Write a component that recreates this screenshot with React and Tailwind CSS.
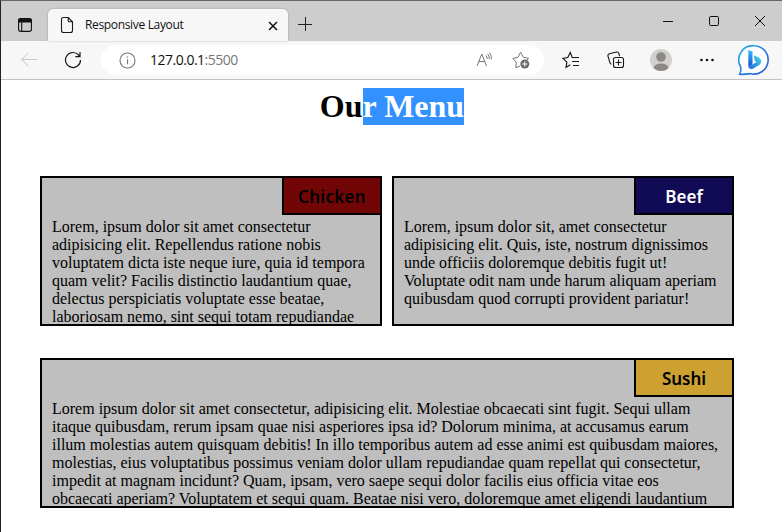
const svg = (x) => ({ fill: "none", stroke: x, className: "block shrink-0" });

function Tab() {
  return (
    <div className="mt-[8px] flex h-8 w-[240px] items-center rounded-t-[5px] bg-[#f7f7f7] shadow-[0_0_2px_rgba(0,0,0,0.3)]">
      <svg {...svg("#1a1a1a")} width="14" height="18" viewBox="0 0 14 18" className="ml-3 block shrink-0" strokeWidth="1.1">
        <path d="M3.2 1.5H8.2L12.5 5.8V14.5Q12.5 16.5 10.5 16.5H3.5Q1.5 16.5 1.5 14.5V3.2Q1.5 1.5 3.2 1.5ZM8.2 1.5V4.8Q8.2 5.8 9.2 5.8H12.5" />
      </svg>
      <span className="ml-[11px] w-[98px] whitespace-nowrap font-['Open_Sans',sans-serif] text-[12px] leading-4 tracking-[-0.34px] text-[#111]">Responsive Layout</span>
      <svg {...svg("#111")} width="10" height="10" viewBox="0 0 10 10" className="mt-px ml-[85px] block shrink-0" strokeWidth="1.5">
        <path d="M1 1L9 9M9 1L1 9" />
      </svg>
    </div>
  );
}

function TitleBar() {
  return (
    <div className="flex h-10 items-start bg-[#cdcdcd]">
      <div className="flex w-[47px] justify-start pt-[17px] pl-[17px]">
        <svg {...svg("#111")} width="14" height="14" viewBox="0 0 14 14" strokeWidth="1.1">
          <rect x=".6" y=".6" width="12.8" height="12.8" rx="2.2" />
          <path d="M1 1.2H13V4H1Z" fill="#111" />
          <path d="M3.7 4V13" />
        </svg>
      </div>
      <Tab />
      <svg {...svg("#222")} width="14" height="14" viewBox="0 0 14 14" className="mt-[16px] ml-[10px] block" strokeWidth="1">
        <path d="M0 7.5H14M7.5 0V14" />
      </svg>
      <div className="mt-[15px] mr-[17px] ml-auto flex gap-9">
        <svg {...svg("#111")} width="10" height="10" viewBox="0 0 10 10"><path d="M0 5.5H10" /></svg>
        <svg {...svg("#111")} width="10" height="10" viewBox="0 0 10 10"><rect x=".5" y=".5" width="9" height="9" rx="1.2" /></svg>
        <svg {...svg("#111")} width="10" height="10" viewBox="0 0 10 10"><path d="M0 0L10 10M10 0L0 10" /></svg>
      </div>
    </div>
  );
}

function BingLogo() {
  return (
    <svg width="32" height="34" viewBox="0 0 32 34" className="ml-[24px] block shrink-0">
      <defs>
        <linearGradient id="ring" x1="0" y1="0" x2="1" y2="1">
          <stop offset="0" stopColor="#26b4ef" />
          <stop offset=".55" stopColor="#2278dc" />
          <stop offset="1" stopColor="#3557db" />
        </linearGradient>
        <linearGradient id="stem" x1="0" y1="0" x2="0" y2="1">
          <stop offset="0" stopColor="#36bdf5" />
          <stop offset="1" stopColor="#1749d2" />
        </linearGradient>
        <linearGradient id="bowl" x1="0" y1="1" x2="1" y2="0">
          <stop offset="0" stopColor="#1b62e4" />
          <stop offset="1" stopColor="#42e0e6" />
        </linearGradient>
      </defs>
      <path d="M16 2.7A14.2 14.2 0 1 1 12.2 30.6Q7 31.5 1.7 31.3Q3.2 29 2.7 24A14.2 14.2 0 0 1 16 2.7Z" fill="#fff" stroke="url(#ring)" strokeWidth="1.6" />
      <path d="M10.3 7L14.5 8.5V21.5L10.3 24Z" fill="url(#stem)" />
      <path d="M15.8 12.2L20.8 14.6Q23.4 16.3 23.1 19.2Q22.7 21.2 20.8 22.2L14.4 26Q11.3 26.6 10.3 24L14.5 21.5L18.5 19L16.8 17.8Z" fill="url(#bowl)" />
    </svg>
  );
}

function Toolbar() {
  return (
    <div className="flex h-[39px] items-center border-b border-[#c3c3c3] bg-[#f7f7f7]">
      <svg {...svg("#c8c8c8")} width="18" height="16" viewBox="0 0 18 16" className="ml-[19px] block shrink-0">
        <path d="M17 7.5H1.5M8.5 .8L1.5 7.5L8.5 14.2" />
      </svg>
      <svg {...svg("#181818")} width="18" height="18" viewBox="0 0 18 18" className="ml-[26px] block shrink-0" strokeWidth="1.2">
        <path d="M16.5 9A7.5 7.5 0 1 1 14.6 4L16 5.5M16 1V5.6H11.3" />
      </svg>
      <div className="ml-[19px] flex h-[30px] w-[443px] items-center rounded-full bg-white">
        <svg {...svg("#777")} width="17" height="17" viewBox="0 0 17 17" className="ml-[18px] block shrink-0" strokeWidth="1.1">
          <circle cx="8.5" cy="8.5" r="7.5" />
          <path d="M8.5 7.2V12.2M8.5 4.4V5.8" strokeWidth="1.2" />
        </svg>
        <span className="ml-[14px] w-[88px] whitespace-nowrap font-['Open_Sans',sans-serif] text-[14px] leading-5 tracking-[-0.5px] text-[#111]">127.0.0.1<span className="text-[#777]">:5500</span></span>
        <svg {...svg("#777")} width="17" height="16" viewBox="0 0 17 16" className="ml-[238px] block shrink-0">
          <path d="M1 14L5.8 2L10.6 14M2.7 9.5H8.9M9.7 3.4Q11.3 4.8 11.2 7M11.6 1.9Q13.5 4 13.3 7.2M13.4 .5Q15.7 3.5 15.4 7.4" />
        </svg>
        <svg {...svg("#777")} width="18" height="18" viewBox="0 0 18 18" className="ml-[19px] block shrink-0">
          <path d="M8 15L3.8 16.8L4.4 11.3L.8 7.4L6 6.3L8.6 1.2L11.3 6.3L16.7 7.4L15 9" />
          <circle cx="12.8" cy="13" r="4.5" fill="#6b6b6b" stroke="none" />
          <path d="M10.3 13H15.3M12.8 10.5V15.5" stroke="#fff" />
        </svg>
      </div>
      <svg {...svg("#151515")} width="18" height="18" viewBox="0 0 18 18" className="ml-[18px] block shrink-0" strokeWidth="1.1">
        <path d="M8.3 13.8L4 16.4L4.9 11.2L1 7.4L5.8 6.6L8.3 1.5L10.2 6.5L12 6.8M11.2 6.5H17M10 10.5H17M11 14.5H17" />
      </svg>
      <svg {...svg("#151515")} width="18" height="18" viewBox="0 0 18 18" className="ml-[27px] block shrink-0" strokeWidth="1.1">
        <path d="M4.5 13.2Q3.2 12.8 2.8 11.4L1 5.2Q.6 3.3 2.4 2.8L9.5 1Q11.3 .7 11.8 2.4L12.6 5.2" />
        <rect x="6.5" y="6.5" width="10" height="10" rx="2" fill="#f7f7f7" />
        <path d="M8.5 11.5H14.5M11.5 8.5V14.5" />
      </svg>
      <svg width="22" height="22" viewBox="0 0 22 22" className="ml-[25px] block shrink-0">
        <circle cx="11" cy="11" r="11" fill="#d2d0ce" />
        <circle cx="11" cy="8" r="4.8" fill="#8c8985" />
        <path d="M3.5 19Q4.5 14.5 11 14.5Q17.5 14.5 18.5 19Q15.5 22 11 22Q6.5 22 3.5 19Z" fill="#8c8985" />
      </svg>
      <svg width="14" height="4" viewBox="0 0 14 4" className="ml-[28px] block shrink-0" fill="#111">
        <circle cx="1.5" cy="2" r="1.3" /><circle cx="7" cy="2" r="1.3" /><circle cx="12.5" cy="2" r="1.3" />
      </svg>
      <BingLogo />
    </div>
  );
}

function Card({ title, label, lines }) {
  return (
    <section className="h-[150px] overflow-hidden border-2 border-black bg-[#bfbfbf]">
      <h2 className={"-mt-0.5 -mr-0.5 ml-auto h-[39px] w-[100px] border-2 border-black text-center font-['Noto_Sans',sans-serif] text-[17px] leading-[37px] font-semibold " + label}>{title}</h2>
      <p className="mt-[3px] pl-[10px] font-['Liberation_Serif',serif] text-[16px] leading-[18px] text-black">
        {lines.map((l) => <span key={l} className="block whitespace-nowrap">{l}</span>)}
      </p>
    </section>
  );
}

const chicken = [
  "Lorem, ipsum dolor sit amet consectetur",
  "adipisicing elit. Repellendus ratione nobis",
  "voluptatem dicta iste neque iure, quia id tempora",
  "quam velit? Facilis distinctio laudantium quae,",
  "delectus perspiciatis voluptate esse beatae,",
  "laboriosam nemo, sint sequi totam repudiandae",
];
const beef = [
  "Lorem, ipsum dolor sit, amet consectetur",
  "adipisicing elit. Quis, iste, nostrum dignissimos",
  "unde officiis doloremque debitis fugit ut!",
  "Voluptate odit nam unde harum aliquam aperiam",
  "quibusdam quod corrupti provident pariatur!",
];
const sushi = [
  "Lorem ipsum dolor sit amet consectetur, adipisicing elit. Molestiae obcaecati sint fugit. Sequi ullam",
  "itaque quibusdam, rerum ipsam quae nisi asperiores ipsa id? Dolorum minima, at accusamus earum",
  "illum molestias autem quisquam debitis! In illo temporibus autem ad esse animi est quibusdam maiores,",
  "molestias, eius voluptatibus possimus veniam dolor ullam repudiandae quam repellat qui consectetur,",
  "impedit at magnam incidunt? Quam, ipsam, vero saepe sequi dolor facilis eius officia vitae eos",
  "obcaecati aperiam? Voluptatem et sequi quam. Beatae nisi vero, doloremque amet eligendi laudantium",
];

export default function App() {
  return (
    <div className="h-[532px] w-[782px] overflow-hidden border-t border-l border-t-[#666] border-l-[#222] bg-white">
      <TitleBar />
      <Toolbar />
      <main className="pr-12 pl-[39px]">
        <h1 className="pt-2 pl-[10px] text-center font-['Liberation_Serif',serif] text-[32px] leading-[37px] font-bold text-black">
          Ou<span className="bg-[#3390ff] pb-px text-white">r Menu</span>
        </h1>
        <div className="mt-[51px] grid grid-cols-2 gap-x-[10px] gap-y-8">
          <Card title="Chicken" label="bg-[#720505] text-black tracking-[0.3px]" lines={chicken} />
          <Card title="Beef" label="bg-[#110a55] text-white" lines={beef} />
          <div className="col-span-2">
            <Card title="Sushi" label="bg-[#cca132] text-black" lines={sushi} />
          </div>
        </div>
      </main>
    </div>
  );
}
